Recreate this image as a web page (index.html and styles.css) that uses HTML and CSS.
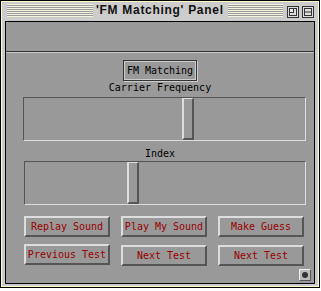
FILE: index.html
```html
<!DOCTYPE html>
<html>
<head>
<meta charset="utf-8">
<link rel="stylesheet" href="styles.css">
</head>
<body>
<div class="window">
  <div class="titlebar">
    <div class="stripes left"></div>
    <div class="title">'FM Matching' Panel</div>
    <div class="stripes right"></div>
    <div class="tbtn">
      <svg width="12" height="12" viewBox="0 0 12 12"><rect x="0.5" y="0.5" width="11" height="11" fill="#ddd" stroke="#333"/><rect x="2.5" y="2.5" width="7" height="7" fill="none" stroke="#333"/><rect x="2.5" y="2.5" width="4" height="4" fill="#eee" stroke="#333"/></svg>
    </div>
    <div class="tbtn">
      <svg width="12" height="12" viewBox="0 0 12 12"><rect x="0.5" y="0.5" width="11" height="11" fill="#ddd" stroke="#333"/><rect x="2.5" y="2.5" width="7" height="7" fill="none" stroke="#333"/><line x1="2" y1="6" x2="10" y2="6" stroke="#333"/></svg>
    </div>
  </div>
  <div class="content">
    <div class="topbar"></div>
    <div class="panel">
      <div class="heading">FM Matching</div>
      <div class="label first">Carrier Frequency</div>
      <div class="trough first"><div class="thumb" style="margin-left:158px"></div></div>
      <div class="label second">Index</div>
      <div class="trough"><div class="thumb" style="margin-left:102px"></div></div>
      <div class="buttons">
        <div class="btn">Replay Sound</div>
        <div class="btn">Play My Sound</div>
        <div class="btn">Make Guess</div>
        <div class="btn">Previous Test</div>
        <div class="btn low">Next Test</div>
        <div class="btn low">Next Test</div>
      </div>
      <div class="grow"><div class="dot"></div></div>
    </div>
  </div>
</div>
</body>
</html>
```
FILE: styles.css
```css
* { box-sizing: border-box; }
html, body { margin: 0; padding: 0; background: #fff; }
body { width: 321px; height: 291px; overflow: hidden; }

.window {
  width: 320px;
  height: 288px;
  border: 1px solid #000;
  background: #cccccc;
  box-shadow: inset 0 0 0 1px #ffffcc;
  padding: 0 4px 3px 4px;
  display: flex;
  flex-direction: column;
}

.titlebar {
  height: 20px;
  margin: 0 -4px;
  padding: 3px 5px 0 6px;
  display: flex;
  align-items: flex-start;
}
.stripes {
  height: 13px;
  background: repeating-linear-gradient(to bottom, #f4f4dc 0 1px, #9a9a9a 1px 2px);
}
.stripes.left { width: 86px; }
.stripes.right { flex: 1; }
.title {
  margin: 0 4px 0 3px;
  font-family: "Liberation Sans", Arial, sans-serif;
  font-weight: bold;
  font-size: 12px;
  letter-spacing: 0.7px;
  line-height: 13px;
  color: #111;
  white-space: nowrap;
}
.tbtn { width: 12px; height: 12px; margin-left: 4px; margin-top: 2px; }
.tbtn + .tbtn { margin-left: 3px; }
.tbtn svg { display: block; }

.content {
  flex: 1;
  border: 1px solid #000;
  background: #999999;
  display: flex;
  flex-direction: column;
}
.topbar {
  height: 30px;
  border-bottom: 1px solid #333;
}
.panel {
  flex: 1;
  border-top: 1px solid #cccccc;
  display: flex;
  flex-direction: column;
  align-items: center;
  padding: 0 8px 0 17px;
  font-family: "DejaVu Sans Mono", "Liberation Mono", monospace;
  font-size: 10px;
  color: #000;
}
.heading {
  margin-top: 7px;
  width: 74px;
  height: 21px;
  border: 1px solid #333;
  box-shadow: inset 0 0 0 1px #cccccc, 1px 1px 0 #cccccc;
  line-height: 19px;
  text-align: center;
  margin-left: -9px;
}
.label {
  line-height: 12px;
  margin-left: -9px;
  white-space: nowrap;
}
.label.first { margin-top: 1px; }
.label.second { margin-top: 7px; }
.trough {
  align-self: stretch;
  height: 44px;
  margin-top: 3px;
  border-top: 1px solid #555;
  border-left: 1px solid #555;
  border-bottom: 1px solid #dddddd;
  border-right: 1px solid #dddddd;
  display: flex;
}
.label.second + .trough { margin-top: 1px; margin-left: 1px; }
.thumb {
  width: 12px;
  height: 42px;
  border-top: 1px solid #dddddd;
  border-left: 2px solid #dddddd;
  border-right: 2px solid #555;
  border-bottom: 2px solid #555;
  background: #999;
}
.buttons {
  align-self: stretch;
  margin-top: 11px;
  margin-left: 1px;
  display: grid;
  grid-template-columns: 86px 86px 86px;
  column-gap: 11px;
  row-gap: 7px;
  align-items: start;
}
.btn {
  height: 21px;
  border-top: 2px solid #dddddd;
  border-left: 2px solid #dddddd;
  border-right: 2px solid #555;
  border-bottom: 2px solid #555;
  color: #990000;
  text-align: center;
  line-height: 17px;
  white-space: nowrap;
}
.btn.low { margin-top: 1px; }
.grow {
  align-self: flex-end;
  margin-top: 3px;
  margin-right: -5px;
  width: 12px;
  height: 12px;
  border-top: 1px solid #eee;
  border-left: 1px solid #eee;
  border-right: 1px solid #555;
  border-bottom: 1px solid #555;
  background: #bbb;
  display: flex;
  align-items: center;
  justify-content: center;
}
.dot { width: 6px; height: 6px; border-radius: 50%; background: #333; }
```
